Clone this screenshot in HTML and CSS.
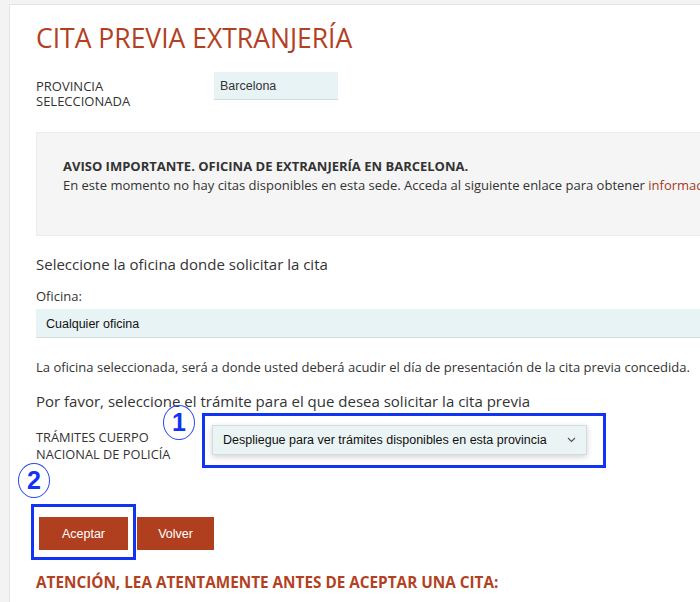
FILE: index.html
```html
<!DOCTYPE html>
<html lang="es">
<head>
  <meta charset="UTF-8">
  <meta name="viewport" content="width=device-width, initial-scale=1.0">
  <title>Cita previa extranjería</title>
  <link rel="stylesheet" href="styles.css">
</head>
<body>
  <main class="page">
    <h1 class="title">CITA PREVIA EXTRANJERÍA</h1>

    <div class="field-row">
      <span class="label">PROVINCIA<br>SELECCIONADA</span>
      <span class="value-box">Barcelona</span>
    </div>

    <section class="notice">
      <p class="notice-title">AVISO IMPORTANTE. OFICINA DE EXTRANJERÍA EN BARCELONA.</p>
      <p>En este momento no hay citas disponibles en esta sede. Acceda al siguiente enlace para obtener <a href="#">información</a></p>
    </section>

    <h2 class="lead">Seleccione la oficina donde solicitar la cita</h2>
    <p class="small-label">Oficina:</p>
    <div class="office-select">Cualquier oficina</div>
    <p class="hint">La oficina seleccionada, será a donde usted deberá acudir el día de presentación de la cita previa concedida.</p>

    <h2 class="lead lead-tramite">Por favor, seleccione el trámite para el que desea solicitar la cita previa</h2>
    <div class="tramite-row">
      <span class="label">TRÁMITES CUERPO<br>NACIONAL DE POLICÍA</span>
      <div class="highlight highlight-select">
        <span class="step step-one">1</span>
        <div class="tramite-select">
          <span>Despliegue para ver trámites disponibles en esta provincia</span>
          <svg class="chevron" width="9" height="6" viewBox="0 0 9 6"><path d="M1 1l3.5 3.5L8 1" fill="none" stroke="#555" stroke-width="1.2"/></svg>
        </div>
      </div>
    </div>

    <div class="buttons">
      <span class="step step-two">2</span>
      <div class="highlight highlight-button">
        <button class="btn">Aceptar</button>
      </div>
      <button class="btn btn-back">Volver</button>
    </div>

    <h3 class="warning">ATENCIÓN, LEA ATENTAMENTE ANTES DE ACEPTAR UNA CITA:</h3>
  </main>
</body>
</html>
```

FILE: styles.css
```css
* {
  margin: 0;
  padding: 0;
  box-sizing: border-box;
}

body {
  background: #f3f3f3;
  padding: 4px 0 0 9px;
  overflow: hidden;
  font-family: "Open Sans", "Noto Sans", sans-serif;
  color: #333;
  font-size: 13px;
  line-height: 17px;
}

/* White content panel */
.page {
  width: 780px;
  height: 640px;
  background: #fff;
  border-left: 1px solid #e4e4e4;
  border-top: 1px solid #e4e4e4;
  padding: 18px 0 0 26px;
}

.title {
  font-weight: normal;
  font-size: 26.5px;
  line-height: 30px;
  color: #b3411f;
  margin-bottom: 19px;
}

.field-row {
  display: flex;
  align-items: flex-start;
}

.label {
  width: 178px;
  line-height: 15px;
  padding-top: 7px;
}

.value-box {
  width: 124px;
  height: 28px;
  background: #e8f3f5;
  border-bottom: 1px solid #d6dcdc;
  font-family: "Liberation Sans", Arial, sans-serif;
  font-size: 12.5px;
  padding: 6px 0 0 6px;
}

/* Grey warning box */
.notice {
  margin-top: 23px;
  background: #f5f5f5;
  border: 1px solid #ececec;
  border-right: none;
  height: 104px;
  padding: 24px 0 0 26px;
  line-height: 19px;
  white-space: nowrap;
}

.notice-title {
  font-weight: bold;
}

.notice a {
  color: #a33a1b;
  text-decoration: none;
}

.lead {
  font-weight: normal;
  font-size: 15px;
  line-height: 20px;
  margin-top: 18px;
}

.small-label {
  margin-top: 14px;
}

.office-select {
  margin-top: 4px;
  height: 29px;
  background: #e8f3f5;
  border-bottom: 1px solid #d6dcdc;
  font-family: "Liberation Sans", Arial, sans-serif;
  font-size: 12.5px;
  padding: 7px 0 0 10px;
  color: #111;
}

.hint {
  margin-top: 21px;
  font-size: 13px;
  white-space: nowrap;
}

.lead-tramite {
  margin-top: 15px;
}

.tramite-row {
  display: flex;
  align-items: flex-start;
}

.tramite-row .label {
  width: 166px;
  font-size: 12.8px;
  line-height: 17px;
  padding-top: 18px;
}

/* Blue annotation boxes */
.highlight {
  position: relative;
  border: 3px solid #1133f5;
}

.highlight-select {
  width: 404px;
  height: 55px;
  margin-top: 2px;
  padding: 9px 0 0 7px;
}

.tramite-select {
  width: 375px;
  height: 30px;
  background: #ebf4f5;
  border: 1px solid #d4dcdc;
  box-shadow: 0 2px 6px rgba(0, 0, 0, 0.18);
  display: flex;
  align-items: center;
  justify-content: space-between;
  padding: 0 10px;
  font-family: "Liberation Sans", Arial, sans-serif;
  font-size: 12.5px;
  color: #111;
}

/* Circled step numbers */
.step {
  position: absolute;
  display: flex;
  align-items: center;
  justify-content: center;
  width: 32px;
  height: 35px;
  border: 1.5px solid #2a46f5;
  border-radius: 50%;
  color: #1133f5;
  font-family: "Liberation Sans", Arial, sans-serif;
  font-weight: bold;
  font-size: 25px;
  line-height: 1;
}

.step-one {
  left: -42px;
  top: -11px;
}

.step-two {
  left: -13px;
  top: -41px;
}

.buttons {
  position: relative;
  display: flex;
  align-items: flex-start;
  margin-top: 36px;
  margin-left: -5px;
}

.highlight-button {
  padding: 10px 5px 7px 5px;
}

.btn {
  border: none;
  background: #b03f1f;
  color: #fff;
  font-family: "Liberation Sans", Arial, sans-serif;
  font-size: 12.5px;
  height: 33px;
  width: 89px;
}

.btn-back {
  width: 77px;
  margin: 13px 0 0 1px;
}

.warning {
  margin-top: 12px;
  font-size: 15.3px;
  line-height: 20px;
  color: #b3411f;
}
```
